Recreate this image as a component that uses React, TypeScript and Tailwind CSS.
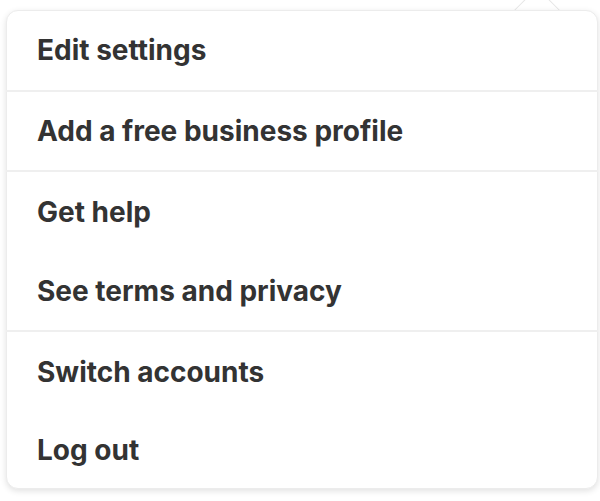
import React from "react";

const groups: { label: string; h: string }[][] = [
  [{ label: "Edit settings", h: "h-[80px]" }],
  [{ label: "Add a free business profile", h: "h-[78px]" }],
  [
    { label: "Get help", h: "h-[79px]" },
    { label: "See terms and privacy", h: "h-[79px]" },
  ],
  [
    { label: "Switch accounts", h: "h-[79px]" },
    { label: "Log out", h: "h-[78px]" },
  ],
];

export default function App() {
  return (
    <div className="w-[600px] h-[501px] bg-white overflow-hidden relative" style={{ fontFamily: "Inter, 'Noto Sans', sans-serif" }}>
      <div className="absolute left-[518px] top-[-5px] w-[38px] h-[38px] rotate-45 bg-white border-[1.5px] border-[#e6e6e6] rounded-[3px]" />
      <div className="absolute left-[6px] top-[10px] w-[592px] h-[479px] bg-white rounded-[12px] border border-[#ececec] shadow-[0_2px_6px_rgba(0,0,0,0.12)]" />
      <div className="relative ml-[6px] mt-[10px] w-[592px] flex flex-col">
        {groups.map((g, gi) => (
          <div key={gi} className={gi > 0 ? "border-t-2 border-[#efefef]" : ""}>
            {g.map((item) => (
              <div
                key={item.label}
                className={`${item.h} flex items-center pl-[31px] text-[28px] font-bold text-[#333333]`}
              >
                {item.label}
              </div>
            ))}
          </div>
        ))}
      </div>
    </div>
  );
}
